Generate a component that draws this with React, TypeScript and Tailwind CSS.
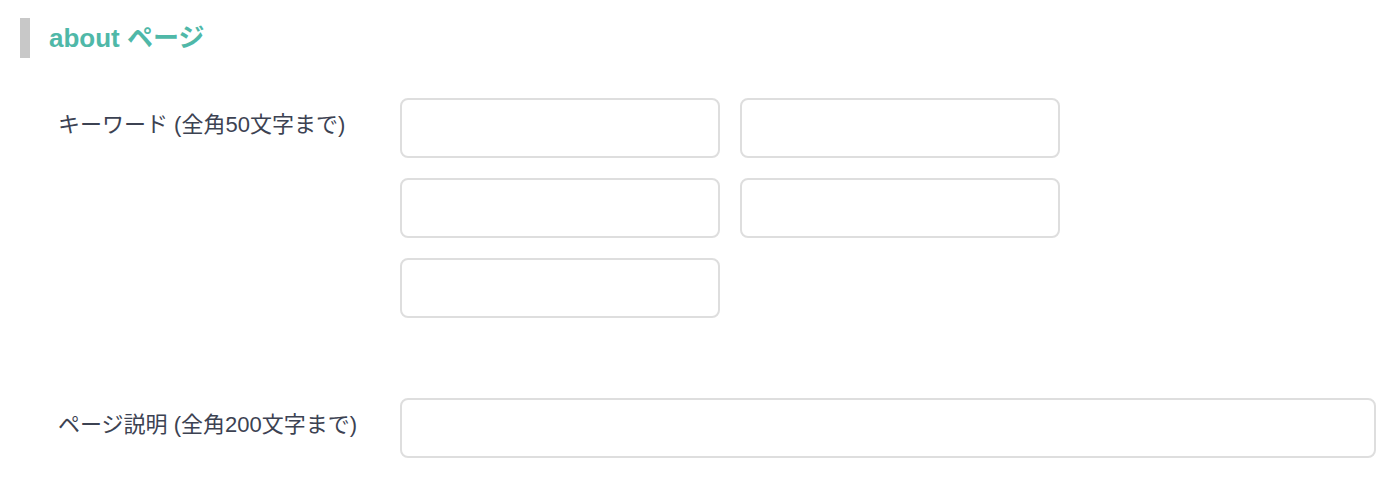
import React from "react";

const font = { fontFamily: '"Liberation Sans", "Noto Sans CJK JP", sans-serif' };

function Box({ className = "" }: { className?: string }) {
  return <input type="text" className={"h-[60px] rounded-lg border-2 border-[#dedede] bg-white outline-none " + className} />;
}

export default function App() {
  return (
    <div className="w-[1394px] h-[478px] bg-white pl-5 pt-[18px]" style={font}>
      <div className="flex h-10 items-center border-l-[10px] border-[#c8c8c8] pl-[19px]">
        <h2 className="text-[26px] font-bold text-[#4fb8a8] leading-none">about ページ</h2>
      </div>
      <div className="mt-10 flex">
        <div className="w-[380px] pl-[38px] pt-[14px] text-[22px] text-[#3c4252] leading-[26px]">キーワード (全角50文字まで)</div>
        <div className="grid grid-cols-[320px_320px] gap-5">
          <Box className="w-[320px]" />
          <Box className="w-[320px]" />
          <Box className="w-[320px]" />
          <Box className="w-[320px]" />
          <Box className="w-[320px]" />
        </div>
      </div>
      <div className="mt-20 flex">
        <div className="w-[380px] pl-[38px] pt-[14px] text-[22px] text-[#3c4252] leading-[26px]">ページ説明 (全角200文字まで)</div>
        <Box className="w-[976px]" />
      </div>
    </div>
  );
}
